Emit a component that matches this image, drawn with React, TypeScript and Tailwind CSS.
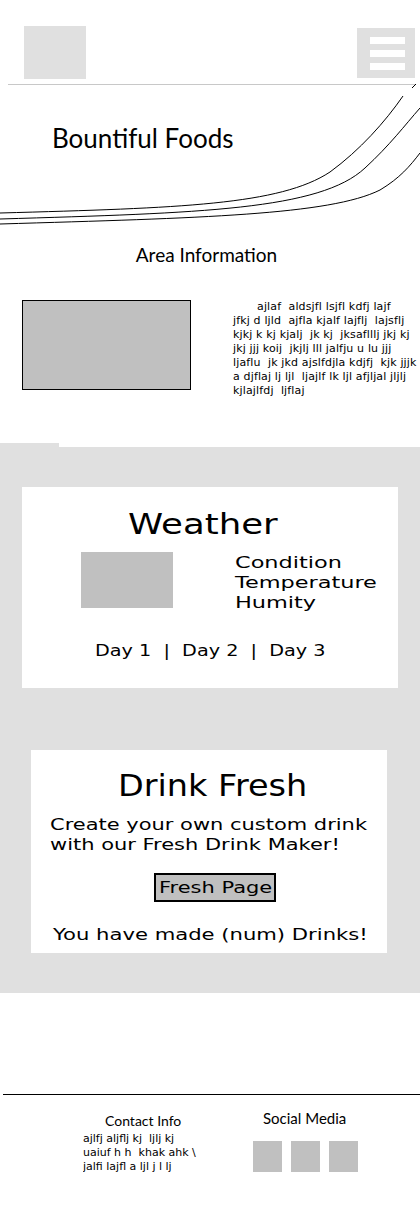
import React from "react";

const lato = { fontFamily: "Lato, 'Open Sans', sans-serif" };
const deja = { fontFamily: "'DejaVu Sans', Verdana, sans-serif" };

const paraLines = [
  "ajlaf  aldsjfl lsjfl kdfj lajf",
  "jfkj d ljld  ajfla kjalf lajflj  lajsflj",
  "kjkj k kj kjalj  jk kj  jksaflllj jkj kj",
  "jkj jjj koij  jkjlj lll jalfju u lu jjj",
  "ljaflu  jk jkd ajslfdjla kdjfj  kjk jjjk",
  "a djflaj lj ljl  ljajlf lk ljl afjljal jljlj",
  "kjlajlfdj  ljflaj",
];

const contactLines = [
  "ajlfj aljflj kj  ljlj kj",
  "uaiuf h h  khak ahk \\",
  "jalfi lajfl a ljl j l lj",
];

export default function App() {
  return (
    <div className="relative w-[420px] min-h-[1216px] bg-white text-black overflow-hidden">
      {/* decorative swoosh lines */}
      <svg
        className="absolute top-0 left-0 pointer-events-none"
        width="420"
        height="240"
        viewBox="0 0 420 240"
        fill="none"
      >
        <path d="M0 213 C 180 208, 280 205, 330 172 C 360 150, 385 122, 403 96" stroke="#000" strokeWidth="1" />
        <path d="M412 88 L416 84" stroke="#000" strokeWidth="1" />
        <path d="M0 219 C 200 213, 320 210, 365 168 C 390 145, 405 125, 420 108" stroke="#000" strokeWidth="1" />
        <path d="M0 224 C 200 218, 330 215, 380 190 C 400 178, 410 166, 420 153" stroke="#000" strokeWidth="1" />
      </svg>

      {/* header */}
      <div className="flex justify-between pt-[26px] h-[84px]">
        <div className="ml-[24px] w-[62px] h-[53px] bg-[#e0e0e0]" />
        <div className="mt-[2px] mr-[5px] w-[58px] h-[50px] bg-[#e0e0e0] flex flex-col gap-[6px] pt-[9px] pl-[13px]">
          <div className="w-[35px] h-[7px] bg-white" />
          <div className="w-[35px] h-[7px] bg-white" />
          <div className="w-[35px] h-[7px] bg-white" />
        </div>
      </div>
      <div className="ml-[8px] mr-[5px] h-px bg-[#c8c8c8]" />

      {/* hero */}
      <div className="h-[150px] pt-[38px] pl-[52px]">
        <h1 className="text-[26px] leading-[31px] font-normal" style={lato}>
          Bountiful Foods
        </h1>
      </div>

      {/* area information */}
      <div className="h-[208px] pt-[8px]">
        <h2 className="text-[19px] leading-[23px] text-center pr-[7px]" style={lato}>
          Area Information
        </h2>
        <div className="flex mt-[34px] pl-[22px]">
          <div className="w-[169px] h-[90px] border border-black bg-[#c0c0c0] shrink-0" />
          <div className="ml-[42px] text-[11px] leading-[14px] tracking-[0.15px]" style={deja}>
            {paraLines.map((l, i) => (
              <div key={i} className={i === 0 ? "whitespace-pre pl-[24px]" : "whitespace-pre"}>
                {l}
              </div>
            ))}
          </div>
        </div>
      </div>

      {/* grey notch */}
      <div className="flex h-[4px]">
        <div className="w-[59px] bg-[#e0e0e0]" />
      </div>

      {/* grey section */}
      <div className="bg-[#e0e0e0] h-[546px] pt-[40px]">
        {/* weather card */}
        <div className="ml-[22px] w-[376px] h-[201px] bg-white pt-[22px]" style={deja}>
          <div className="pl-[106px] text-[28px] leading-[32px]">
            <span className="inline-block origin-left scale-x-[1.27]">Weather</span>
          </div>
          <div className="flex items-start mt-[11px]">
            <div className="ml-[59px] w-[92px] h-[56px] bg-[#c0c0c0] shrink-0" />
            <div className="ml-[62px] mt-[1px] text-[16px] leading-[20px] origin-left scale-x-[1.4]">
              <div>Condition</div>
              <div>Temperature</div>
              <div>Humity</div>
            </div>
          </div>
          <div className="mt-[28px] pl-[73px] text-[16px] leading-[20px] whitespace-pre">
            <span className="inline-block origin-left scale-x-[1.2]">Day 1  |  Day 2  |  Day 3</span>
          </div>
        </div>

        {/* drink card */}
        <div className="mt-[62px] ml-[31px] w-[356px] h-[203px] bg-white pt-[17px]" style={deja}>
          <div className="pl-[87px] text-[31px] leading-[36px]">
            <span className="inline-block origin-left scale-x-[1.08]">Drink Fresh</span>
          </div>
          <div className="mt-[12px] pl-[19px] text-[16px] leading-[20px] whitespace-nowrap">
            <div className="origin-left scale-x-[1.31]">Create your own custom drink</div>
            <div className="origin-left scale-x-[1.31]">with our Fresh Drink Maker!</div>
          </div>
          <div className="mt-[18px] ml-[123px] w-[122px] h-[29px] border-2 border-black bg-[#c0c0c0] flex items-center pl-[3px] text-[16px] whitespace-nowrap">
            <span className="inline-block origin-left scale-x-[1.31]">Fresh Page</span>
          </div>
          <div className="mt-[23px] pl-[22px] text-[16px] leading-[20px] whitespace-nowrap">
            <span className="inline-block origin-left scale-x-[1.32]">You have made (num) Drinks!</span>
          </div>
        </div>
      </div>

      {/* footer */}
      <div className="pt-[101px]">
        <div className="ml-[3px] h-px bg-black" />
        <div className="flex items-start">
          <div className="ml-[83px] w-[170px] pt-[17px]">
            <div className="pl-[22px] text-[14px] leading-[17px]" style={lato}>
              Contact Info
            </div>
            <div className="mt-[3px] h-[40px] overflow-hidden text-[11px] leading-[14px]" style={deja}>
              {contactLines.map((l, i) => (
                <div key={i} className="whitespace-pre">
                  {l}
                </div>
              ))}
            </div>
          </div>
          <div className="pt-[14px]">
            <div className="pl-[10px] text-[15px] leading-[18px]" style={lato}>
              Social Media
            </div>
            <div className="flex gap-[9px] mt-[14px]">
              <div className="w-[29px] h-[31px] bg-[#c0c0c0]" />
              <div className="w-[29px] h-[31px] bg-[#c0c0c0]" />
              <div className="w-[29px] h-[31px] bg-[#c0c0c0]" />
            </div>
          </div>
        </div>
      </div>
    </div>
  );
}
